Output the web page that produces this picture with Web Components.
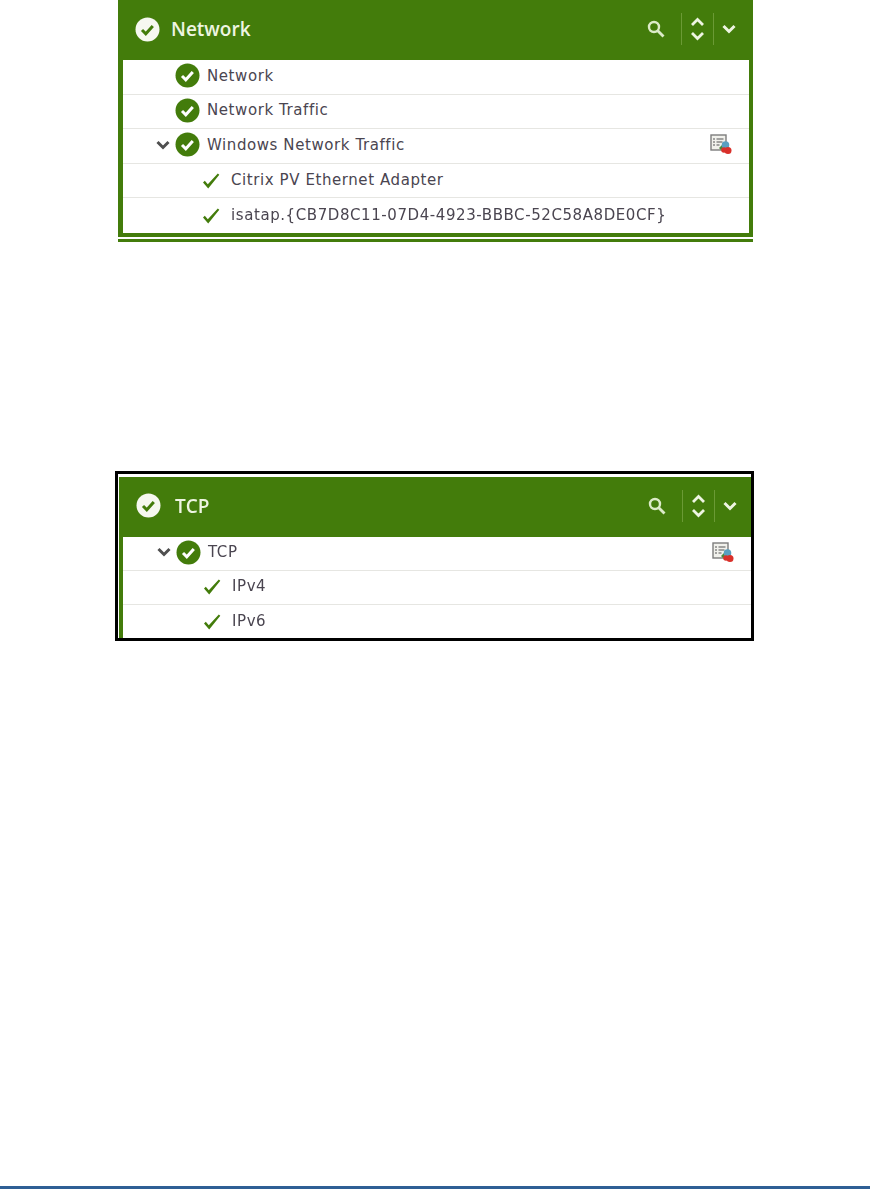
<!DOCTYPE html>
<html lang="en">
<head>
<meta charset="utf-8">
<title>Network and TCP</title>
<style>
  html, body { margin: 0; padding: 0; background: #fff; }
  body { font-family: "Open Sans", "Liberation Sans", sans-serif; }
</style>
</head>
<body>
<report-page>
  <status-panel title="Network">
    <status-row icon="circle" label="Network"></status-row>
    <status-row icon="circle" label="Network Traffic"></status-row>
    <status-row icon="circle" label="Windows Network Traffic" expanded action></status-row>
    <status-row icon="tick" label="Citrix PV Ethernet Adapter"></status-row>
    <status-row icon="tick" label="isatap.{CB7D8C11-07D4-4923-BBBC-52C58A8DE0CF}"></status-row>
  </status-panel>
  <status-panel title="TCP" framed>
    <status-row icon="circle" label="TCP" expanded action></status-row>
    <status-row icon="tick" label="IPv4"></status-row>
    <status-row icon="tick" label="IPv6"></status-row>
  </status-panel>
</report-page>

<script>
const GREEN = "#437c0b";

const circleCheck = (fill, tick) => `
  <svg width="25" height="25" viewBox="0 0 25 25" aria-hidden="true">
    <circle cx="12.5" cy="12.5" r="12" fill="${fill}"/>
    <path d="M7 13l3.800 3.800 7-7.800" fill="none" stroke="${tick}" stroke-width="3"/>
  </svg>`;

const tickIcon = `
  <svg width="18" height="16" viewBox="0 0 18 16" aria-hidden="true">
    <path d="M1 9.500l1.800-1.700 3 3.400L15.800 0.500l1.500 1.200L6.200 15.500z" fill="${GREEN}"/>
  </svg>`;

const chevron = (color, width = 14) => `
  <svg width="${width}" height="10" viewBox="0 0 14 10" aria-hidden="true">
    <path d="M1.500 2l5.500 5.500L12.500 2" fill="none" stroke="${color}" stroke-width="3"/>
  </svg>`;

const actionIcon = `
  <svg width="22" height="21" viewBox="0 0 22 21" aria-hidden="true">
    <rect x="1" y="1" width="15" height="15" fill="#f1f1ec" stroke="#7d7d7d" stroke-width="1.400"/>
    <path d="M3 5h2M6.500 5h7M3 8h2M6.500 8h6M3 11h2M6.500 11h3" stroke="#555" stroke-width="1.200"/>
    <path d="M9 14l5-5 2 2-5 5z" fill="#4a8a3a"/>
    <circle cx="15.500" cy="11" r="3.800" fill="#5aa0c0"/>
    <circle cx="18" cy="16.500" r="3.500" fill="#d9302a"/>
    <circle cx="14" cy="16" r="2.800" fill="#d9302a"/>
  </svg>`;

const pageTemplate = document.createElement("template");
pageTemplate.innerHTML = `
  <style>
    :host {
      display: flex;
      flex-direction: column;
      box-sizing: border-box;
      height: 1189px;
      padding: 0 116px 0 115px;
    }
    .panels {
      display: flex;
      flex-direction: column;
      gap: 229px;
      flex: 1;
      filter: blur(0.45px);
    }
    .footer {
      height: 3px;
      margin: 0 -116px 0 -115px;
      background: #2f5f95;
    }
  </style>
  <div class="panels"><slot></slot></div>
  <div class="footer"></div>
`;

class ReportPage extends HTMLElement {
  constructor() {
    super();
    this.attachShadow({ mode: "open" }).appendChild(pageTemplate.content.cloneNode(true));
  }
}

const panelTemplate = document.createElement("template");
panelTemplate.innerHTML = `
  <style>
    :host {
      display: block;
      box-sizing: border-box;
      padding: 0 1px 0 3px;
    }
    :host([framed]) {
      padding: 3px 0 0 1px;
      border: 3px solid #000;
      height: 170px;
      overflow: hidden;
      --row-start: 34px;
      --row-height: 34px;
    }
    .panel {
      border-left: 5px solid ${GREEN};
      border-right: 4px solid ${GREEN};
      border-bottom: 4px solid ${GREEN};
      background: #fff;
    }
    :host([framed]) .panel {
      border-left-width: 4px;
      border-right-width: 0;
      border-bottom-width: 0;
    }
    .tail {
      height: 3px;
      margin-top: 2px;
      background: ${GREEN};
    }
    :host([framed]) .tail { display: none; }
    .head {
      display: flex;
      align-items: center;
      height: 60px;
      margin: 0 -4px 0 -5px;
      padding: 0 16px 2px 17px;
      box-sizing: border-box;
      background: ${GREEN};
      color: #eef5e2;
      font-size: 19px;
      font-weight: 600;
    }
    :host([framed]) .head { margin: 0 0 0 -4px; padding: 0 13px 2px 17px; }
    :host([framed]) .title { margin-left: 14px; }
    .status { display: flex; }
    .title { margin-left: 11px; flex: 1; }
    .tools { display: flex; align-items: center; }
    .tool {
      display: flex;
      flex-direction: column;
      align-items: center;
      justify-content: center;
      gap: 4px;
      height: 32px;
    }
    .search { margin-right: 15px; }
    .sort {
      width: 31px;
      border-left: 1px solid #6b9a35;
      border-right: 1px solid #6b9a35;
    }
    .more { margin-left: 7px; }
  </style>
  <div class="panel">
    <div class="head">
      <span class="status"></span>
      <span class="title"></span>
      <div class="tools">
        <span class="tool search">
          <svg width="20" height="20" viewBox="0 0 20 20" aria-hidden="true">
            <circle cx="8" cy="8" r="5" fill="none" stroke="#dcebc8" stroke-width="2.400"/>
            <path d="M11.500 11.500l6 6" stroke="#dcebc8" stroke-width="2.800"/>
          </svg>
        </span>
        <span class="tool sort">
          <svg width="15" height="10" viewBox="0 0 14 10" aria-hidden="true">
            <path d="M1.500 8L7 2.500 12.500 8" fill="none" stroke="#eef5e2" stroke-width="2.800"/>
          </svg>
          <svg width="15" height="10" viewBox="0 0 14 10" aria-hidden="true">
            <path d="M1.500 2L7 7.500 12.500 2" fill="none" stroke="#eef5e2" stroke-width="2.800"/>
          </svg>
        </span>
        <span class="tool more">${chevron("#eef5e2", 16)}</span>
      </div>
    </div>
    <slot></slot>
  </div>
  <div class="tail"></div>
`;

class StatusPanel extends HTMLElement {
  constructor() {
    super();
    const shadow = this.attachShadow({ mode: "open" });
    shadow.appendChild(panelTemplate.content.cloneNode(true));
    shadow.querySelector(".title").textContent = this.getAttribute("title");
    shadow.querySelector(".status").innerHTML = circleCheck("#f6f8f0", GREEN);
  }
}

const rowTemplate = document.createElement("template");
rowTemplate.innerHTML = `
  <style>
    :host {
      display: flex;
      align-items: center;
      box-sizing: border-box;
      height: var(--row-height, 34.600px);
      padding: 0 17px 2px var(--row-start, 33px);
      border-bottom: 1px solid #e6e6e2;
      color: #4a4550;
      font-family: "DejaVu Sans", "Open Sans", sans-serif;
      font-size: 15px;
      letter-spacing: 0.58px;
    }
    :host(:last-child) { border-bottom: 0; }
    .caret { display: flex; width: 19px; }
    .icon { display: flex; align-items: center; justify-content: center; }
    .label { flex: 1; margin-left: 7px; white-space: nowrap; }
    :host([icon="tick"]) .icon { margin: 2px 0 0 27px; }
    :host([icon="tick"]) .label { margin-left: 11px; }
    .action { display: flex; }
  </style>
  <span class="caret"></span>
  <span class="icon"></span>
  <span class="label"></span>
  <span class="action"></span>
`;

class StatusRow extends HTMLElement {
  constructor() {
    super();
    const shadow = this.attachShadow({ mode: "open" });
    shadow.appendChild(rowTemplate.content.cloneNode(true));
    shadow.querySelector(".label").textContent = this.getAttribute("label");
    shadow.querySelector(".icon").innerHTML =
      this.getAttribute("icon") === "tick" ? tickIcon : circleCheck(GREEN, "#fff");
    if (this.hasAttribute("expanded")) shadow.querySelector(".caret").innerHTML = chevron("#4f4f4f");
    if (this.hasAttribute("action")) shadow.querySelector(".action").innerHTML = actionIcon;
  }
}

customElements.define("report-page", ReportPage);
customElements.define("status-panel", StatusPanel);
customElements.define("status-row", StatusRow);
</script>
</body>
</html>
